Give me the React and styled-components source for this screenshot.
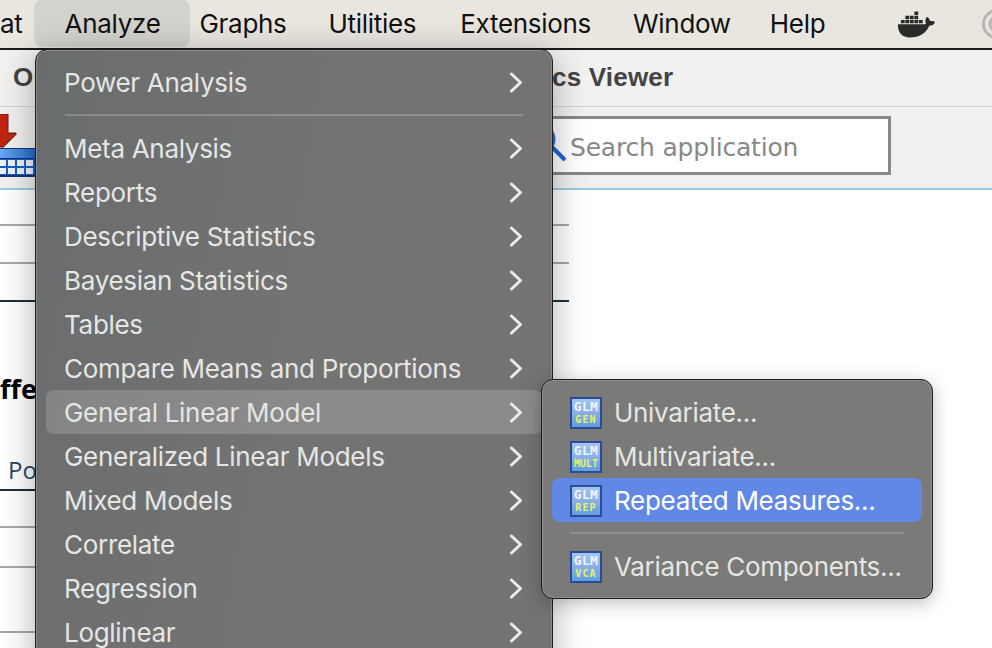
import React from "react";
import styled, { createGlobalStyle } from "styled-components";
import { FaDocker } from "react-icons/fa";

const Global = createGlobalStyle`
  html, body { margin: 0; padding: 0; background: #fff; }
  #root { width: 992px; height: 648px; overflow: hidden; }
`;
const Page = styled.div`
  position: relative; width: 992px; height: 648px; overflow: hidden;
  display: flex; flex-direction: column; background: #fff;
  font-family: Inter, "Liberation Sans", sans-serif;
`;
const MenuBar = styled.div`
  height: 48px; flex: none; display: flex; align-items: center;
  background: #e9e6e0; border-bottom: 2px solid #1a1a1a; font-size: 26px; color: #111;
  letter-spacing: -0.3px; overflow: hidden; position: relative;
`;
const BarItem = styled.div`
  flex: none; height: 48px; line-height: 47px; white-space: nowrap; margin-left: ${p => p.$ml}px;
  ${p => p.$active && `background: #d4d2cc; border-radius: 8px; padding: 0 29px 0 31px; height: 47px; margin-top:-1px;`}
`;
const Docker = styled(FaDocker)` flex: none; margin-left: 73px; color: #2a2a28; font-size: 37px; `;
const Ring = styled.svg` flex: none; margin-left: 47px; `;
const TitleBar = styled.div`
  height: 57px; flex: none; background: #f1f1ef; border-bottom: 1px solid #d2d2d0; padding-bottom: 2px; box-sizing: border-box;
  display: flex; align-items: center; font: bold 26px "Liberation Sans", sans-serif; color: #444; letter-spacing: 0.2px;
`;
const TitleLeft = styled.span` margin-left: 13px; width: 539px; `;
const Toolbar = styled.div`
  height: 83px; box-sizing: border-box; flex: none; background: #f0f0ee; border-bottom: 2px solid #98cbe6;
  display: flex; align-items: flex-start;
`;
const ImportIcon = styled.svg` flex: none; margin-top: 7px; width: 36px; height: 64px; `;
const Search = styled.div`
  margin-left: 494px; margin-top: 9px; box-sizing: border-box; width: 361px; height: 59px;
  background: #fff; border: 3px solid #888; display: flex; align-items: center;
  font: 25px "DejaVu Sans", sans-serif; color: #888; padding-left: 6px;
`;
const SearchIcon = styled.svg` flex: none; width: 32px; height: 40px; margin-left: -2px; `;
const SearchText = styled.span` margin-left: 1px; margin-top: 4px; letter-spacing: -0.2px; `;
const Content = styled.div` flex: 1; background: #fff; min-height: 0; `;
const Rule = styled.div`
  height: ${p => p.$h}px; width: ${p => p.$w}px; box-sizing: border-box;
  border-bottom: ${p => (p.$dark ? "2px solid #1b3040" : "2px solid #a8a8a8")};
`;
const Heading = styled.div`
  height: 38px; margin-top: 68px; font: bold 27px "Open Sans", sans-serif; color: #000; line-height: 38px;
`;
const PoRow = styled.div`
  height: 52px; margin-top: 31px; width: 520px; box-sizing: border-box; padding: 14px 0 0 8px;
  border-bottom: 2px solid #1b3040; font: 24px "Open Sans", sans-serif; color: #1f4a6a; line-height: 34px;
`;
const Menu = styled.div`
  position: absolute; left: 35px; top: 49px; width: 518px; height: 640px; box-sizing: border-box;
  border: 1px solid #1e1e1e; border-radius: 12px;
  background: linear-gradient(100deg, #696c6d 0%, #737373 50%, #757371 100%);
  box-shadow: inset 0 0 0 1px #8a8a88, 0 6px 34px rgba(0,0,0,.32);
  padding: 10px 10px 0; color: #e6e6e4; font-size: 26px; letter-spacing: -0.3px;
`;
const Row = styled.div`
  height: 44px; display: flex; align-items: center; justify-content: space-between;
  padding: 0 19px 0 18px; box-sizing: border-box; border-radius: 8px; white-space: nowrap;
  ${p => p.$hover && "background: rgba(255,255,255,.17);"}
`;
const Sep = styled.div`
  height: 2px; margin: 10px 19px; background: rgba(255,255,255,.2);
`;
const Chevron = styled.svg` width: 14px; height: 21px; flex: none; `;
const SubMenu = styled.div`
  position: absolute; left: 541px; top: 379px; width: 392px; height: 220px; box-sizing: border-box;
  border: 1px solid #1e1e1e; border-radius: 12px; background: #7a7a78;
  box-shadow: inset 0 0 0 1px #8e8e8c, 0 4px 18px rgba(0,0,0,.25);
  padding: 10px 10px 0; color: #e6e6e4; font-size: 26px; letter-spacing: -0.3px;
`;
const SubRow = styled.div`
  height: 44px; display: flex; align-items: center; gap: 12px; padding: 1px 0 0 18px; box-sizing: border-box;
  border-radius: 8px; white-space: nowrap;
  ${p => p.$sel && "background: #6288e6; color: #fff;"}
`;
const GlmIcon = styled.div`
  width: 32px; height: 32px; box-sizing: border-box; flex: none; border: 2px solid #2a4a9c;
  background: linear-gradient(180deg, #a6c4ec 0%, #86ade4 55%, #5f9fdc 100%); overflow: hidden;
  display: flex; flex-direction: column; align-items: center; margin-top: 1px;
  font-family: "DejaVu Sans Mono", monospace; font-weight: bold;
`;
const GlmTop = styled.span`
  display: block; font-size: 13px; line-height: 15px; color: #eef4fc; letter-spacing: 0.4px;
`;
const GlmBottom = styled.span`
  display: block; font-size: 10px; line-height: 12px; color: #e6f26a; letter-spacing: ${p => (p.$small ? "0" : "1.2px")};
`;
const SubSep = styled.div` height: 2px; margin: 10px 18px; background: rgba(255,255,255,.16); `;

const Arrow = () => (
  <Chevron viewBox="0 0 14 21">
    <polyline points="2.5,2 11.5,10.5 2.5,19" fill="none" stroke="#ebebe9" strokeWidth="3" strokeLinecap="round" strokeLinejoin="round" />
  </Chevron>
);
const Glm = ({ label }) => (
  <GlmIcon><GlmTop>GLM</GlmTop><GlmBottom $small={label.length > 3}>{label}</GlmBottom></GlmIcon>
);
const items = ["Reports", "Descriptive Statistics", "Bayesian Statistics", "Tables", "Compare Means and Proportions", "General Linear Model", "Generalized Linear Models", "Mixed Models", "Correlate", "Regression", "Loglinear"];

export default function App() {
  return (
    <Page>
      <Global />
      <MenuBar>
        <BarItem $ml={0}>at</BarItem>
        <BarItem $ml={11} $active>Analyze</BarItem>
        <BarItem $ml={10}>Graphs</BarItem>
        <BarItem $ml={42}>Utilities</BarItem>
        <BarItem $ml={44}>Extensions</BarItem>
        <BarItem $ml={42}>Window</BarItem>
        <BarItem $ml={39}>Help</BarItem>
        <Docker />
        <Ring width="30" height="30" viewBox="0 0 30 30">
          <circle cx="15" cy="15" r="13.5" fill="none" stroke="#b8b6b2" strokeWidth="3" />
          <circle cx="15" cy="15" r="7" fill="none" stroke="#b8b6b2" strokeWidth="3" />
        </Ring>
      </MenuBar>
      <TitleBar>
        <TitleLeft>Ou</TitleLeft>
        <span>cs Viewer</span>
      </TitleBar>
      <Toolbar>
        <ImportIcon viewBox="0 0 36 64">
          <defs>
            <linearGradient id="hdr" x1="0" x2="1" y1="0" y2="0">
              <stop offset="0" stopColor="#6aa8f0" />
              <stop offset="1" stopColor="#1f6ac8" />
            </linearGradient>
          </defs>
          <polygon points="-4,0 8,0 8,19 16,19 16,21 14,21 14,23 12,23 12,25 10,25 10,27 8,27 8,29 6,29 6,31 4,31 4,33 -4,33" fill="#bf2412" stroke="#7a1408" strokeWidth="1" />
          <rect x="0" y="34" width="36" height="29" fill="#1c2f78" />
          <rect x="0" y="35" width="36" height="9" fill="url(#hdr)" />
          <rect x="0" y="45" width="36" height="16" fill="#1560c0" />
          {[0, 1, 2, 3].map(c => [0, 1].map(r => (
            <rect key={c + "-" + r} x={c * 9 - 1} y={46 + r * 8} width="7" height="6" fill="#eef1f6" />
          )))}
        </ImportIcon>
        <Search>
          <SearchIcon viewBox="0 0 32 40">
            <circle cx="4" cy="13" r="13" fill="none" stroke="#2a6ae0" strokeWidth="3" />
            <line x1="15" y1="21" x2="28" y2="34" stroke="#1f5fe0" strokeWidth="4" />
          </SearchIcon>
          <SearchText>Search application</SearchText>
        </Search>
      </Toolbar>
      <Content>
        <Rule $h={36} $w={569} />
        <Rule $h={38} $w={569} />
        <Rule $h={38} $w={569} $dark />
        <Heading>ffe</Heading>
        <PoRow>Po</PoRow>
        <Rule $h={37} $w={520} />
        <Rule $h={40} $w={520} />
        <Rule $h={65} $w={520} />
      </Content>
      <Menu>
        <Row>Power Analysis<Arrow /></Row>
        <Sep />
        <Row>Meta Analysis<Arrow /></Row>
        {items.map(t => (
          <Row key={t} $hover={t === "General Linear Model"}>{t}<Arrow /></Row>
        ))}
      </Menu>
      <SubMenu>
        <SubRow><Glm label="GEN" />Univariate...</SubRow>
        <SubRow><Glm label="MULT" />Multivariate...</SubRow>
        <SubRow $sel><Glm label="REP" />Repeated Measures...</SubRow>
        <SubSep />
        <SubRow><Glm label="VCA" />Variance Components...</SubRow>
      </SubMenu>
    </Page>
  );
}
